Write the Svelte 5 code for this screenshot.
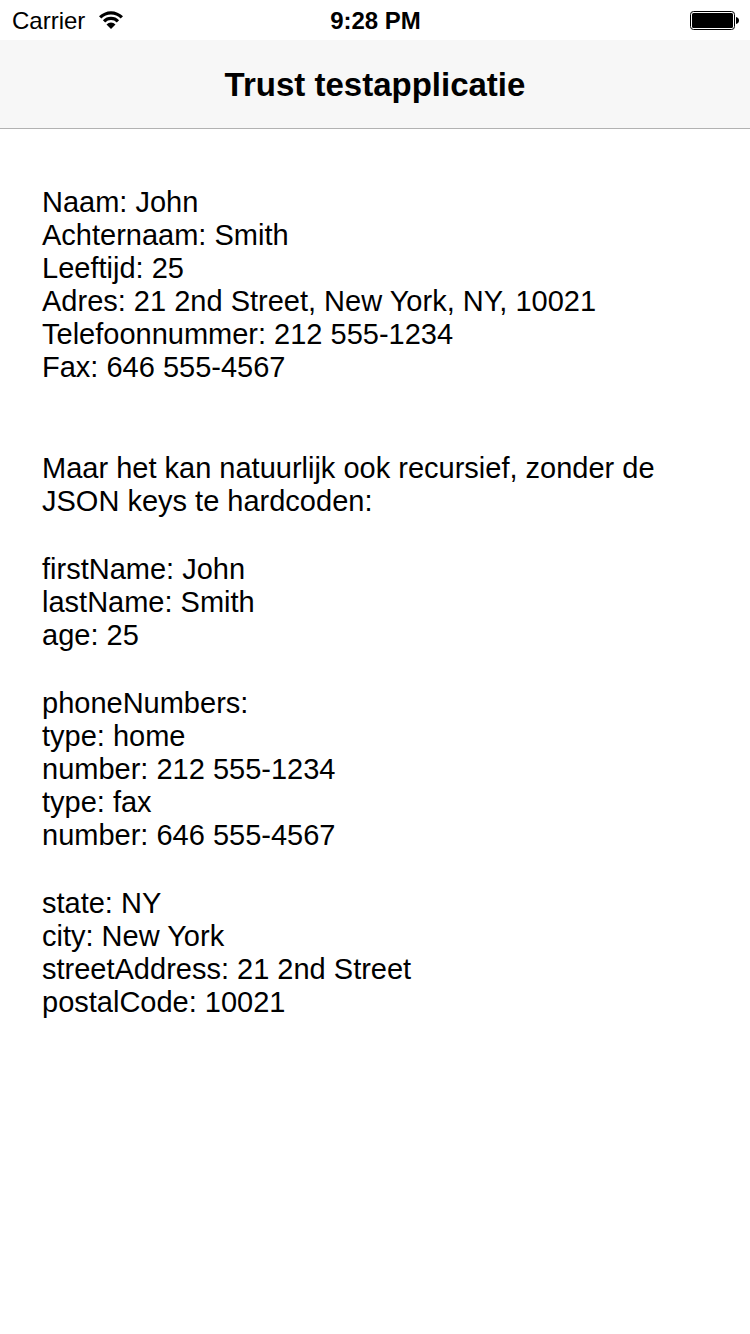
<script>
  const sections = [
    ['Naam: John', 'Achternaam: Smith', 'Leeftijd: 25', 'Adres: 21 2nd Street, New York, NY, 10021', 'Telefoonnummer: 212 555-1234', 'Fax: 646 555-4567'],
    ['Maar het kan natuurlijk ook recursief, zonder de JSON keys te hardcoden:'],
    ['firstName: John', 'lastName: Smith', 'age: 25'],
    ['phoneNumbers:', 'type: home', 'number: 212 555-1234', 'type: fax', 'number: 646 555-4567'],
    ['state: NY', 'city: New York', 'streetAddress: 21 2nd Street', 'postalCode: 10021'],
  ];
</script>

<div class="status">
  <div class="carrier">
    <span>Carrier</span>
    <svg width="26" height="20" viewBox="0 0 26 20" aria-hidden="true">
      <path d="M1 5.300a17 17 0 0 1 24 0l-2.300 2.300a13.800 13.800 0 0 0-19.400 0z" />
      <path d="M4.900 9.200a11.500 11.500 0 0 1 16.200 0l-2.300 2.300a8.200 8.200 0 0 0-11.600 0z" />
      <path d="M8.500 13.500a6.200 6.200 0 0 1 9 0L13 18z" />
    </svg>
  </div>
  <time>9:28 PM</time>
  <svg class="battery" width="49" height="19" viewBox="0 0 49 19" aria-hidden="true">
    <rect x="0.5" y="0.5" width="44" height="18" rx="3" fill="none" stroke="#000" />
    <rect x="2" y="2" width="41" height="15" rx="1.5" />
    <path d="M46 6c4 .5 4 6.500 0 7z" />
  </svg>
</div>
<header><h1>Trust testapplicatie</h1></header>
<main>
  {#each sections as lines}
    <section>
      {#each lines as line}
        <p>{line}</p>
      {/each}
    </section>
  {/each}
</main>

<style>
  :global(body) {
    background: #fff;
    color: #000;
    font-family: 'Liberation Sans', Arial, sans-serif;
  }
  .status {
    display: grid;
    grid-template-columns: 1fr auto 1fr;
    align-items: center;
    box-sizing: border-box;
    height: 40px;
    padding: 1px 11px 0 12px;
    font-size: 24px;
  }
  .carrier {
    display: flex;
    align-items: center;
    gap: 13px;
  }
  time {
    font-weight: 700;
  }
  .battery {
    justify-self: end;
  }
  header {
    display: flex;
    align-items: center;
    justify-content: center;
    box-sizing: border-box;
    height: 89px;
    padding-top: 2px;
    background: #f7f7f7;
    border-bottom: 1px solid #b2b2b2;
  }
  h1 {
    margin: 0;
    font-size: 33px;
    font-weight: 700;
  }
  main {
    display: flex;
    flex-direction: column;
    gap: 35px;
    padding: 57px 42px;
    font-size: 29px;
    line-height: 33px;
  }
  section:first-child {
    padding-bottom: 33px;
  }
  p {
    margin: 0;
  }
</style>
